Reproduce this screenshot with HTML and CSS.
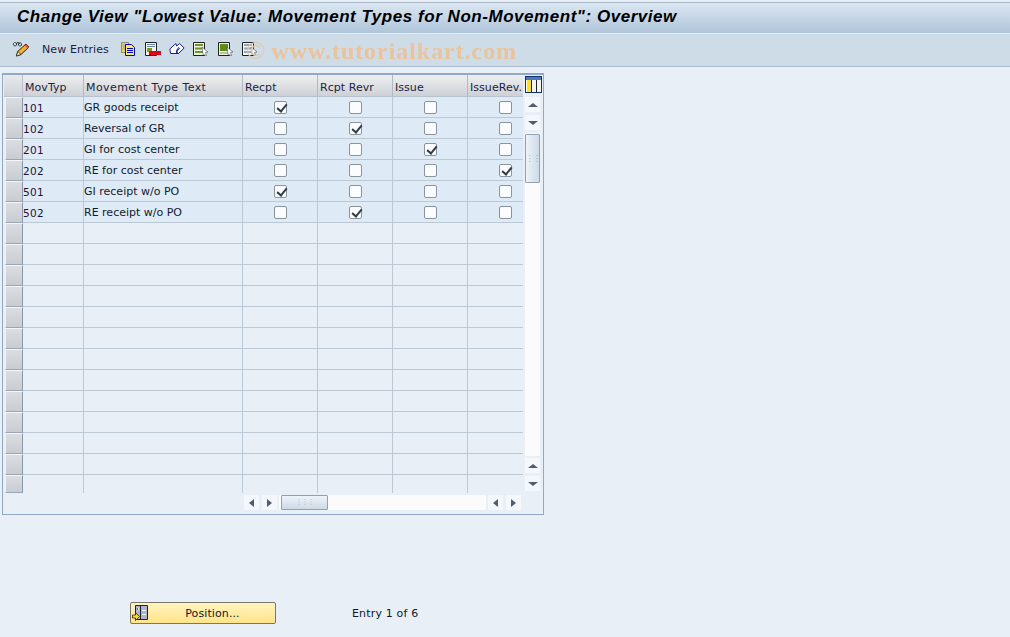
FILE: index.html
```html
<!DOCTYPE html>
<html lang="en">
<head>
<meta charset="utf-8">
<title>Change View</title>
<link rel="stylesheet" href="styles.css">
</head>
<body>
<header class="title-bar"><h1>Change View "Lowest Value: Movement Types for Non-Movement": Overview</h1></header>
<nav class="toolbar">
  <svg class="tool-pencil" width="18" height="16" viewBox="0 0 18 16"><path d="M1.500 2.500a1.500 1.500 0 1 0 3 1.500a1.500 1.500 0 1 0-3-1.500M4 2.500l2-1 2 1M6.500 3a1.500 1.500 0 1 0 3 1a1.500 1.500 0 1 0-3-1" fill="none" stroke="#333" stroke-width="1"/><path d="M4.500 15l1.200-4.500 8.300-7.500 3 3-8 7.500z" fill="#f6b02c" stroke="#2a2018"/><path d="M4.500 15l1.200-4.500 3.300 3z" fill="#f8e4c0" stroke="#2a2018" stroke-width=".7"/><path d="M13.500 4l3 3" stroke="#e8503c" stroke-width="2"/></svg>
  <span class="tool-label">New Entries</span>
  <svg class="tool" width="16" height="14" viewBox="0 0 16 14"><path d="M.5.500h7v10h-7z" fill="#e6da70" stroke="#8a8a70"/><path d="M1.500 3h5M1.500 5h5M1.500 7h5" stroke="#9a9a80"/><path d="M4.500 2.500h6l3 3v8h-9z" fill="#ffe860" stroke="#0000c0"/><path d="M6 6.500h6M6 8.500h6M6 10.500h6" stroke="#0000c0"/></svg>
  <svg class="tool" width="16" height="14" viewBox="0 0 16 14"><path d="M.5.500h11v13h-11z" fill="#f4f4f0" stroke="#222"/><path d="M2 2.500h8M2 4.500h8" stroke="#6a8aa8"/><rect x="2" y="6" width="5" height="4" fill="#7a9a20"/><rect x="4" y="9" width="12" height="4" fill="#e0001a"/></svg>
  <svg class="tool" width="16" height="14" viewBox="0 0 16 14"><path d="M.8 7l6-5.500.8 2.500 3-2.500 4.500 4.500-6 6-2-2 3.500-3.500-1-1-2 3 1 3h-7z" fill="#fff" stroke="#1a1a9a"/></svg>
  <svg class="tool tool-wide" width="16" height="14" viewBox="0 0 16 14"><path d="M.5.500h11v13h-11z" fill="#eef0e0" stroke="#222"/><path d="M2 2h8v2h-8zM2 5.500h8v2h-8zM2 9h8v2h-8z" fill="#6f9428"/><path d="M9 5l6 5-2.500.5 1 3-3.500-1z" fill="#fff" stroke="#333" stroke-width=".5"/></svg>
  <svg class="tool" width="16" height="14" viewBox="0 0 16 14"><path d="M.5.500h11v13h-11z" fill="#eef0e0" stroke="#222"/><path d="M2 2h8v7h-8z" fill="#5f8a18"/><path d="M2 10h8v2h-8z" fill="#b8c8a0"/><path d="M9 5l6 5-2.500.5 1 3-3.500-1z" fill="#fff" stroke="#333" stroke-width=".5"/></svg>
  <svg class="tool" width="16" height="14" viewBox="0 0 16 14"><path d="M.5.500h11v13h-11z" fill="#f4f4f0" stroke="#222"/><path d="M2 2h8v2h-8zM2 5.500h8v2h-8zM2 9h8v2h-8z" fill="#8ea8c0"/><path d="M9 5l6 5-2.500.5 1 3-3.500-1z" fill="#fff" stroke="#333" stroke-width=".5"/></svg>
</nav>
<div class="watermark"><span class="wm-mark">©</span>www.tutorialkart.com</div>
<main class="panel">
  <div class="table-area">
    <div class="row head">
      <div class="sel-corner"></div>
      <div class="hcell">MovTyp</div><div class="hcell wide">Movement Type Text</div><div class="hcell">Recpt</div><div class="hcell">Rcpt Revr</div><div class="hcell">Issue</div><div class="hcell last">IssueRev.</div>
    </div>
    <div class="row data"><div class="sel"></div><div class="cell num">101</div><div class="cell">GR goods receipt</div><div class="cell chk"><i class="cb on"></i></div><div class="cell chk"><i class="cb"></i></div><div class="cell chk"><i class="cb"></i></div><div class="cell chk"><i class="cb"></i></div></div>
    <div class="row data"><div class="sel"></div><div class="cell num">102</div><div class="cell">Reversal of GR</div><div class="cell chk"><i class="cb"></i></div><div class="cell chk"><i class="cb on"></i></div><div class="cell chk"><i class="cb"></i></div><div class="cell chk"><i class="cb"></i></div></div>
    <div class="row data"><div class="sel"></div><div class="cell num">201</div><div class="cell">GI for cost center</div><div class="cell chk"><i class="cb"></i></div><div class="cell chk"><i class="cb"></i></div><div class="cell chk"><i class="cb on"></i></div><div class="cell chk"><i class="cb"></i></div></div>
    <div class="row data"><div class="sel"></div><div class="cell num">202</div><div class="cell">RE for cost center</div><div class="cell chk"><i class="cb"></i></div><div class="cell chk"><i class="cb"></i></div><div class="cell chk"><i class="cb"></i></div><div class="cell chk"><i class="cb on"></i></div></div>
    <div class="row data"><div class="sel"></div><div class="cell num">501</div><div class="cell">GI receipt w/o PO</div><div class="cell chk"><i class="cb on"></i></div><div class="cell chk"><i class="cb"></i></div><div class="cell chk"><i class="cb"></i></div><div class="cell chk"><i class="cb"></i></div></div>
    <div class="row data"><div class="sel"></div><div class="cell num">502</div><div class="cell">RE receipt w/o PO</div><div class="cell chk"><i class="cb"></i></div><div class="cell chk"><i class="cb on"></i></div><div class="cell chk"><i class="cb"></i></div><div class="cell chk"><i class="cb"></i></div></div>
    <div class="row"><div class="sel"></div><div class="cell"></div><div class="cell"></div><div class="cell"></div><div class="cell"></div><div class="cell"></div><div class="cell"></div></div>
    <div class="row"><div class="sel"></div><div class="cell"></div><div class="cell"></div><div class="cell"></div><div class="cell"></div><div class="cell"></div><div class="cell"></div></div>
    <div class="row"><div class="sel"></div><div class="cell"></div><div class="cell"></div><div class="cell"></div><div class="cell"></div><div class="cell"></div><div class="cell"></div></div>
    <div class="row"><div class="sel"></div><div class="cell"></div><div class="cell"></div><div class="cell"></div><div class="cell"></div><div class="cell"></div><div class="cell"></div></div>
    <div class="row"><div class="sel"></div><div class="cell"></div><div class="cell"></div><div class="cell"></div><div class="cell"></div><div class="cell"></div><div class="cell"></div></div>
    <div class="row"><div class="sel"></div><div class="cell"></div><div class="cell"></div><div class="cell"></div><div class="cell"></div><div class="cell"></div><div class="cell"></div></div>
    <div class="row"><div class="sel"></div><div class="cell"></div><div class="cell"></div><div class="cell"></div><div class="cell"></div><div class="cell"></div><div class="cell"></div></div>
    <div class="row"><div class="sel"></div><div class="cell"></div><div class="cell"></div><div class="cell"></div><div class="cell"></div><div class="cell"></div><div class="cell"></div></div>
    <div class="row"><div class="sel"></div><div class="cell"></div><div class="cell"></div><div class="cell"></div><div class="cell"></div><div class="cell"></div><div class="cell"></div></div>
    <div class="row"><div class="sel"></div><div class="cell"></div><div class="cell"></div><div class="cell"></div><div class="cell"></div><div class="cell"></div><div class="cell"></div></div>
    <div class="row"><div class="sel"></div><div class="cell"></div><div class="cell"></div><div class="cell"></div><div class="cell"></div><div class="cell"></div><div class="cell"></div></div>
    <div class="row"><div class="sel"></div><div class="cell"></div><div class="cell"></div><div class="cell"></div><div class="cell"></div><div class="cell"></div><div class="cell"></div></div>
    <div class="row last-row"><div class="sel"></div><div class="cell"></div><div class="cell"></div><div class="cell"></div><div class="cell"></div><div class="cell"></div><div class="cell"></div></div>
    <div class="hscroll">
      <span class="sb-btn"><b class="ar left"></b></span><span class="sb-btn"><b class="ar right"></b></span>
      <div class="h-track"><div class="h-thumb"><em class="grip">⋮⋮⋮</em></div></div>
      <span class="sb-btn"><b class="ar left"></b></span><span class="sb-btn"><b class="ar right"></b></span>
    </div>
  </div>
  <aside class="vscroll">
    <svg class="col-config" width="17" height="17" viewBox="0 0 17 17"><rect x=".5" y=".5" width="16" height="16" fill="#fff" stroke="#10306a"/><rect x="1" y="1" width="15" height="3" fill="#4a78c0"/><rect x="2" y="4" width="4" height="12" fill="#ffe020"/><rect x="7" y="4" width="4" height="12" fill="#f4f4f4"/><rect x="12" y="4" width="4" height="12" fill="#f4f4f4"/><path d="M6.500 4v12M11.500 4v12" stroke="#222"/></svg>
    <span class="sb-btn v"><b class="ar up"></b></span>
    <span class="sb-btn v"><b class="ar down"></b></span>
    <div class="v-track"><div class="v-thumb"><em class="grip v-grip">⋮⋮</em></div></div>
    <span class="sb-btn v"><b class="ar up"></b></span>
    <span class="sb-btn v"><b class="ar down"></b></span>
  </aside>
</main>
<footer class="footer">
  <button class="pos-btn" type="button">
    <svg class="pos-icon" width="16" height="16" viewBox="0 0 16 16"><path d="M3.500 .5h12v14h-12z" fill="#aab4d8" stroke="#222"/><path d="M8.500 1v13" stroke="#222"/><path d="M5 2.500l2 1.500-2 1.500M10 5.500h4M10 9.500h4" stroke="#fff"/><path d="M.5 10h3v-2.500l4 4-4 4v-2.500h-3z" fill="#ffdc20" stroke="#222" stroke-width=".8"/></svg>
    <span>Position...</span>
  </button>
  <span class="entry">Entry 1 of 6</span>
</footer>
</body>
</html>
```
FILE: styles.css
```css
* { box-sizing: border-box; }
html, body { margin: 0; padding: 0; }
body {
  width: 1010px;
  height: 637px;
  overflow: hidden;
  position: relative;
  background: #e8eff7;
  font-family: "DejaVu Sans", sans-serif;
  font-size: 11px;
  color: #10182a;
}
.title-bar {
  margin-top: 2px;
  height: 32px;
  border-top: 1px solid #a6b6c6;
  border-bottom: 1px solid #e2eaf2;
  background: linear-gradient(#dbe7f2, #afc5da);
  padding-left: 17px;
  padding-bottom: 2px;
  display: flex;
  align-items: center;
}
.title-bar h1 {
  margin: 0;
  font-family: "Liberation Sans", sans-serif;
  font-size: 17px;
  font-weight: bold;
  font-style: italic;
  letter-spacing: .54px;
  color: #000;
  white-space: nowrap;
}
.toolbar {
  height: 33px;
  background: #cedce8;
  border-bottom: 1px solid #a8bacb;
  display: flex;
  align-items: center;
  padding-left: 12px;
}
.tool { margin-right: 8px; flex: none; margin-top: -3px; }
.tool-wide { margin-right: 9px; }
.tool-pencil { margin-right: 12px; flex: none; margin-top: -3px; }
.tool-label { margin-right: 12px; margin-top: -1px; color: #1a2440; letter-spacing: .1px; }
.watermark {
  position: absolute;
  left: 246px;
  top: 37px;
  font-family: "Liberation Serif", serif;
  font-weight: bold;
  font-size: 24px;
  line-height: 28px;
  letter-spacing: .95px;
  color: #e9c49c;
  white-space: nowrap;
}
.wm-mark { font-weight: normal; margin-right: 5px; font-size: 26px; color: #e6c8a8; }
.panel {
  margin: 6px 0 0 2px;
  width: 542px;
  height: 442px;
  border: 1px solid #8faac8;
  border-top-width: 2px;
  padding: 0 1px 0 1px;
  display: flex;
}
.table-area { width: 520px; }
.row {
  display: grid;
  grid-template-columns: 19px 61px 159px 75px 75px 75px 55px;
  height: 21px;
}
.row.head { height: 22px; }
.sel-corner {
  background: linear-gradient(#e8e9eb, #cfd3d8);
  border-right: 1px solid #b8c2cc;
  border-bottom: 1px solid #b8c2cc;
}
.hcell {
  background: linear-gradient(#eeeff1, #cdd1d6);
  border-right: 1px solid #b0bac4;
  border-bottom: 1px solid #b8c2cc;
  padding: 4px 0 0 2px;
  line-height: 17px;
  white-space: nowrap;
  color: #1a2440;
  letter-spacing: .05px;
}
.hcell.wide { letter-spacing: .42px; }
.hcell.last { border-right: 0; }
.sel {
  margin-left: 1px;
  background: linear-gradient(#dadde1, #c8cdd3);
  border-top: 1px solid #f4f6f8;
  border-left: 1px solid #f0f2f4;
  border-right: 1px solid #8c98a6;
  border-bottom: 1px solid #9aa6b4;
}
.cell {
  border-right: 1px solid #bcc8d4;
  border-bottom: 1px solid #bcc8d4;
  padding: 2px 0 0 0;
  line-height: 18px;
  white-space: nowrap;
  color: #121a30;
}
.cell:last-child { border-right: 0; }
.data .cell { background: #deeaf5; }
.cell.num { color: #2a1030; font-size: 10.500px; letter-spacing: .35px; }
.cell.chk { display: flex; align-items: center; padding: 0 0 0 31px; }
.last-row { height: 18px; }
.last-row .cell { border-bottom: 0; }
.cb {
  display: block;
  position: relative;
  width: 13px;
  height: 13px;
  background: #fbfcfd;
  border: 1px solid #8a949e;
  border-radius: 2px;
}
.cb.on::after {
  content: "";
  position: absolute;
  left: 3.500px;
  top: .5px;
  width: 4px;
  height: 8px;
  border-right: 2px solid #333c48;
  border-bottom: 2px solid #333c48;
  transform: rotate(40deg);
}
.hscroll {
  display: flex;
  height: 16px;
  margin-top: 2px;
  padding-left: 240px;
  gap: 3px;
}
.sb-btn {
  display: flex;
  align-items: center;
  justify-content: center;
  width: 15px;
  height: 15px;
  background: #f4f7fb;
  flex: none;
}
.ar { display: block; width: 0; height: 0; border-style: solid; border-color: transparent; }
.ar.left { border-width: 4.500px 5px 4.500px 0; border-right-color: #4f5e6e; }
.ar.right { border-width: 4.500px 0 4.500px 5px; border-left-color: #4f5e6e; }
.ar.up { border-width: 0 5px 4px 5px; border-bottom-color: #4f5e6e; }
.ar.down { border-width: 4px 5px 0 5px; border-top-color: #4f5e6e; }
.h-track {
  width: 207px;
  height: 15px;
  margin: 0 -1px;
  background: #fbfbfb;
  padding-left: 2px;
}
.h-thumb {
  width: 47px;
  height: 15px;
  border: 1px solid #93a0ae;
  border-radius: 1px;
  background: linear-gradient(#eef3f8, #cddae7);
  display: flex;
  align-items: center;
  justify-content: center;
}
.grip { font-style: normal; font-size: 7px; line-height: 1; color: #a0acb8; letter-spacing: -1px; }
.vscroll {
  width: 17px;
  margin-left: 2px;
  display: flex;
  flex-direction: column;
  align-items: flex-start;
}
.col-config { margin-top: 1px; margin-bottom: 4px; flex: none; }
.sb-btn.v { height: 15px; width: 15px; margin-bottom: 3px; }
.v-track {
  width: 15px;
  height: 323px;
  margin: 0 0 2px;
  padding-top: 1px;
  background: #fbfbfb;
}
.v-thumb {
  width: 15px;
  height: 49px;
  border: 1px solid #93a0ae;
  border-radius: 1px;
  background: linear-gradient(90deg, #eef3f8, #cddae7);
  display: flex;
  align-items: center;
  justify-content: center;
}
.v-grip { font-size: 8px; }
.footer {
  display: flex;
  align-items: center;
  margin-top: 87px;
  padding-left: 130px;
}
.pos-btn {
  width: 146px;
  height: 22px;
  padding: 0 0 0 1px;
  border: 1px solid #77776c;
  border-radius: 2px;
  background: linear-gradient(#fff4c0, #ffe488);
  font: inherit;
  font-size: 11px;
  color: #10182a;
  display: flex;
  align-items: center;
}
.pos-icon { flex: none; }
.pos-btn span { flex: 1; text-align: center; letter-spacing: .1px; padding-left: 2px; }
.entry { margin-left: 76px; letter-spacing: .17px; }
```
